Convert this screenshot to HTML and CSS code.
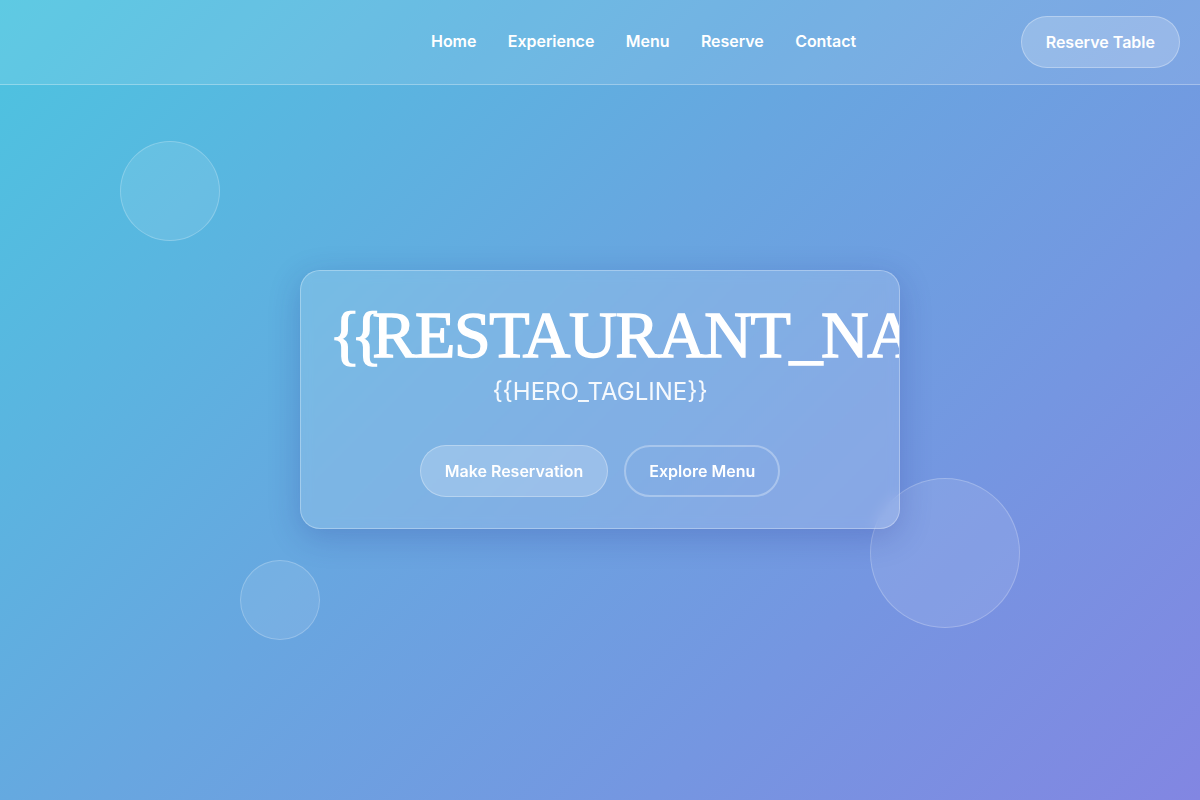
FILE: index.html
```html
<!DOCTYPE html>
<html lang="en">
<head>
<meta charset="utf-8">
<title>Restaurant</title>
<link rel="stylesheet" href="styles.css">
</head>
<body>
<div class="page">
  <div class="bubble bubble-a"></div>
  <div class="bubble bubble-b"></div>
  <div class="bubble bubble-c"></div>
  <header class="header">
    <div class="logo"></div>
    <nav class="nav">
      <a href="#" class="nav-link">Home</a>
      <a href="#" class="nav-link">Experience</a>
      <a href="#" class="nav-link">Menu</a>
      <a href="#" class="nav-link">Reserve</a>
      <a href="#" class="nav-link">Contact</a>
    </nav>
    <a href="#" class="btn btn-glass header-btn">Reserve Table</a>
  </header>
  <main class="hero">
    <section class="card">
      <h1 class="title"><span class="brace">{{</span>RESTAURANT_NAME<span class="brace">}}</span></h1>
      <p class="tagline">{{HERO_TAGLINE}}</p>
      <div class="actions">
        <a href="#" class="btn btn-glass">Make Reservation</a>
        <a href="#" class="btn btn-outline">Explore Menu</a>
      </div>
    </section>
  </main>
</div>
</body>
</html>
```
FILE: styles.css
```css
* { box-sizing: border-box; }
html, body { margin: 0; padding: 0; }
body {
  font-family: Inter, "Noto Sans", sans-serif;
  color: #fff;
  width: 1200px;
  height: 800px;
  overflow: hidden;
}
.page {
  position: relative;
  width: 1200px;
  height: 800px;
  background: linear-gradient(135deg, #4cc4e0 0%, #68a6e0 45%, #8286e2 100%);
  overflow: hidden;
}
.bubble {
  position: absolute;
  border-radius: 50%;
  background: rgba(255, 255, 255, 0.1);
  border: 1px solid rgba(255, 255, 255, 0.22);
}
.bubble-a { left: 120px; top: 141px; width: 100px; height: 100px; }
.bubble-b { left: 240px; top: 560px; width: 80px; height: 80px; }
.bubble-c { left: 870px; top: 478px; width: 150px; height: 150px; }

.header {
  position: relative;
  z-index: 2;
  height: 85px;
  padding: 16px 20px;
  display: flex;
  align-items: center;
  background: rgba(255, 255, 255, 0.1);
  border-bottom: 1px solid rgba(255, 255, 255, 0.3);
}
.logo { width: 245px; }
.nav {
  display: flex;
  gap: 31.5px;
  margin-left: 166px;
  margin-right: auto;
  margin-top: -2px;
}
.nav-link {
  color: #fff;
  text-decoration: none;
  font-size: 16px;
  font-weight: 600;
  letter-spacing: -0.05px;
}
.btn {
  display: inline-flex;
  align-items: center;
  justify-content: center;
  color: #fff;
  text-decoration: none;
  font-size: 16px;
  font-weight: 600;
  line-height: 20px;
  padding: 15px 24px;
  border-radius: 999px;
}
.btn-glass {
  background: rgba(255, 255, 255, 0.2);
  border: 1px solid rgba(255, 255, 255, 0.3);
}
.btn-outline {
  background: transparent;
  border: 2px solid rgba(255, 255, 255, 0.3);
  padding: 15px 23px;
}
.header-btn { height: 52px; }

.hero {
  position: relative;
  z-index: 1;
  display: flex;
  justify-content: center;
  padding-top: 185px;
}
.card {
  width: 600px;
  height: 259px;
  padding: 32px;
  border-radius: 20px;
  background: rgba(255, 255, 255, 0.15);
  border: 1px solid rgba(255, 255, 255, 0.3);
  box-shadow: 0 8px 32px rgba(31, 38, 135, 0.22);
  backdrop-filter: blur(6px);
  overflow: hidden;
  text-align: center;
}
.title {
  margin: 0 0 8px;
  font-family: "Liberation Serif", "DejaVu Serif", serif;
  font-weight: 400;
  font-size: 66px;
  letter-spacing: -1.4px;
  line-height: 64px;
  white-space: nowrap;
  text-align: left;
  -webkit-text-stroke: 1.4px #fff;
}
.brace {
  letter-spacing: -10px;
  margin-left: -4px;
}
.tagline {
  margin: 0 0 37px;
  font-size: 24px;
  line-height: 33px;
  font-weight: 400;
  color: rgba(255, 255, 255, 0.92);
}
.actions {
  display: flex;
  justify-content: center;
  gap: 16px;
}
.actions .btn { height: 52px; }
```
